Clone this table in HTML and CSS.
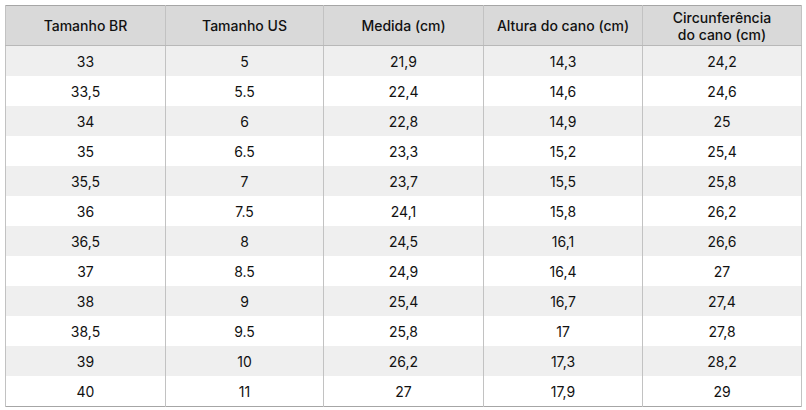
FILE: index.html
```html
<!DOCTYPE html>
<html lang="pt-BR">
<head>
<meta charset="utf-8">
<link rel="stylesheet" href="styles.css">
</head>
<body>
<table class="size-table">
  <colgroup>
    <col class="c1"><col class="c2"><col class="c3"><col class="c4"><col class="c5">
  </colgroup>
  <thead>
    <tr>
      <th>Tamanho BR</th>
      <th>Tamanho US</th>
      <th>Medida (cm)</th>
      <th>Altura do cano (cm)</th>
      <th>Circunferência<br>do cano (cm)</th>
    </tr>
  </thead>
  <tbody>
    <tr><td>33</td><td>5</td><td>21,9</td><td>14,3</td><td>24,2</td></tr>
    <tr><td>33,5</td><td>5.5</td><td>22,4</td><td>14,6</td><td>24,6</td></tr>
    <tr><td>34</td><td>6</td><td>22,8</td><td>14,9</td><td>25</td></tr>
    <tr><td>35</td><td>6.5</td><td>23,3</td><td>15,2</td><td>25,4</td></tr>
    <tr><td>35,5</td><td>7</td><td>23,7</td><td>15,5</td><td>25,8</td></tr>
    <tr><td>36</td><td>7.5</td><td>24,1</td><td>15,8</td><td>26,2</td></tr>
    <tr><td>36,5</td><td>8</td><td>24,5</td><td>16,1</td><td>26,6</td></tr>
    <tr><td>37</td><td>8.5</td><td>24,9</td><td>16,4</td><td>27</td></tr>
    <tr><td>38</td><td>9</td><td>25,4</td><td>16,7</td><td>27,4</td></tr>
    <tr><td>38,5</td><td>9.5</td><td>25,8</td><td>17</td><td>27,8</td></tr>
    <tr><td>39</td><td>10</td><td>26,2</td><td>17,3</td><td>28,2</td></tr>
    <tr><td>40</td><td>11</td><td>27</td><td>17,9</td><td>29</td></tr>
  </tbody>
</table>
</body>
</html>
```

FILE: styles.css
```css
html, body {
  margin: 0;
  background: #ffffff;
}
body {
  padding: 5px;
  font-family: Inter, "Liberation Sans", Arial, sans-serif;
  color: #111111;
}
.size-table {
  border-collapse: collapse;
  width: 796px;
  table-layout: fixed;
  border: 1px solid #a6a6a6;
}
.c1 { width: 160px; }
.c2 { width: 158px; }
.c3 { width: 160px; }
.c4 { width: 159px; }
.c5 { width: 159px; }
.size-table th,
.size-table td {
  border-left: 1px solid #c2c2c2;
  border-right: 1px solid #c2c2c2;
  text-align: center;
  padding: 0;
}
.size-table th {
  background: #d9d9d9;
  height: 39px;
  font-size: 14px;
  font-weight: 500;
  line-height: 17px;
  border-bottom: 1px solid #b8b8b8;
}
.size-table td {
  height: 30px;
  font-size: 14px;
  line-height: 17px;
}
.size-table tbody tr:nth-child(odd) td {
  background: #efefef;
}
```
